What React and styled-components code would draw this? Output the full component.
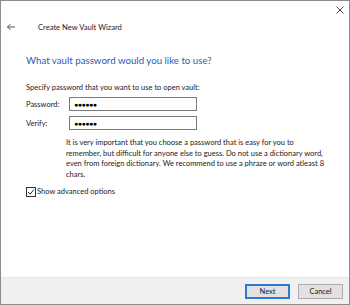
import React from "react";
import styled, { createGlobalStyle } from "styled-components";

const Global = createGlobalStyle`
  html, body { margin: 0; padding: 0; background: #fff; }
  body { font-family: Lato, "Noto Sans", sans-serif; }
  * { box-sizing: border-box; }
`;

const Window = styled.div`
  width: 350px;
  height: 305px;
  border: 1px solid #8c8c8c;
  background: #fff;
  display: flex;
  flex-direction: column;
  position: relative;
  color: #1a1a1a;
`;

const CloseButton = styled.div`
  position: absolute;
  top: 4px;
  right: 5px;
  width: 9px;
  height: 9px;
  display: flex;
  align-items: center;
  justify-content: center;
`;

const Header = styled.div`
  display: flex;
  align-items: center;
  height: 20px;
  margin-top: 16px;
  padding-left: 5px;
  gap: 22px;
`;

const HeaderTitle = styled.span`
  font-size: 7.6px;
  color: #1a1a1a;
`;

const Body = styled.div`
  flex: 1;
  padding: 16px 25px 0 25px;
  display: flex;
  flex-direction: column;
`;

const Heading = styled.h1`
  margin: 0;
  font-size: 9.7px;
  font-weight: 400;
  color: #2d5bb5;
  line-height: 15px;
`;

const Intro = styled.p`
  margin: 14px 0 0 0;
  font-size: 7.5px;
  line-height: 11px;
`;

const FieldRow = styled.div`
  display: flex;
  align-items: center;
  margin-top: ${(p) => p.$top}px;
`;

const FieldLabel = styled.label`
  width: 43px;
  font-size: 7.5px;
  line-height: 11px;
`;

const PasswordBox = styled.div`
  width: 128px;
  height: 14px;
  border: 1px solid #7a7a7a;
  display: flex;
  align-items: center;
  padding-left: 4px;
  font-family: "Noto Sans", sans-serif;
  font-size: 7px;
  letter-spacing: -0.5px;
  color: #000;
`;

const Note = styled.p`
  margin: 8px 0 0 40px;
  font-size: 7.5px;
  line-height: 10.7px;
`;

const CheckRow = styled.div`
  display: flex;
  align-items: center;
  margin-top: 6px;
  gap: 1px;
  font-size: 7.5px;
`;

const Footer = styled.div`
  height: 27px;
  background: #f0f0f0;
  border-top: 1px solid #e6e6e6;
  display: flex;
  justify-content: flex-end;
  align-items: center;
  gap: 8px;
  padding-right: 6px;
`;

const Button = styled.button`
  width: 45px;
  height: 15px;
  padding: 0;
  font-family: inherit;
  font-size: 7.5px;
  color: #1a1a1a;
  background: #e1e1e1;
  border: 1px solid ${(p) => (p.$primary ? "#2a7ad4" : "#adadad")};
  box-shadow: ${(p) => (p.$primary ? "inset 0 0 0 1px #2a7ad4" : "none")};
`;

export default function App() {
  return (
    <>
      <Global />
      <Window>
        <CloseButton>
          <svg width="8" height="8" viewBox="0 0 8 8">
            <path d="M0.5 0.5L7.5 7.5M7.5 0.5L0.5 7.5" stroke="#333" strokeWidth="0.9" />
          </svg>
        </CloseButton>
        <Header>
          <svg width="10" height="8" viewBox="0 0 10 8">
            <path d="M9 4H1.5M4.5 1L1.5 4L4.5 7" stroke="#555" strokeWidth="1" fill="none" />
          </svg>
          <HeaderTitle>Create New Vault Wizard</HeaderTitle>
        </Header>
        <Body>
          <Heading>What vault password would you like to use?</Heading>
          <Intro>Specify password that you want to use to open vault:</Intro>
          <FieldRow $top={4}>
            <FieldLabel>Password:</FieldLabel>
            <PasswordBox>●●●●●●</PasswordBox>
          </FieldRow>
          <FieldRow $top={5}>
            <FieldLabel>Verify:</FieldLabel>
            <PasswordBox>●●●●●●</PasswordBox>
          </FieldRow>
          <Note>
            It is very important that you choose a password that is easy for you to remember, but difficult for anyone else to guess. Do not use a dictionary word, even from foreign dictionary. We recommend to use a phraze or word atleast 8 chars.
          </Note>
          <CheckRow>
            <svg width="10" height="10" viewBox="0 0 10 10">
              <rect x="0.5" y="0.5" width="9" height="9" fill="#fff" stroke="#333" />
              <path d="M2 5L4 7.2L8 2.5" stroke="#222" strokeWidth="1" fill="none" />
            </svg>
            <span>Show advanced options</span>
          </CheckRow>
        </Body>
        <Footer>
          <Button $primary>Next</Button>
          <Button>Cancel</Button>
        </Footer>
      </Window>
    </>
  );
}
